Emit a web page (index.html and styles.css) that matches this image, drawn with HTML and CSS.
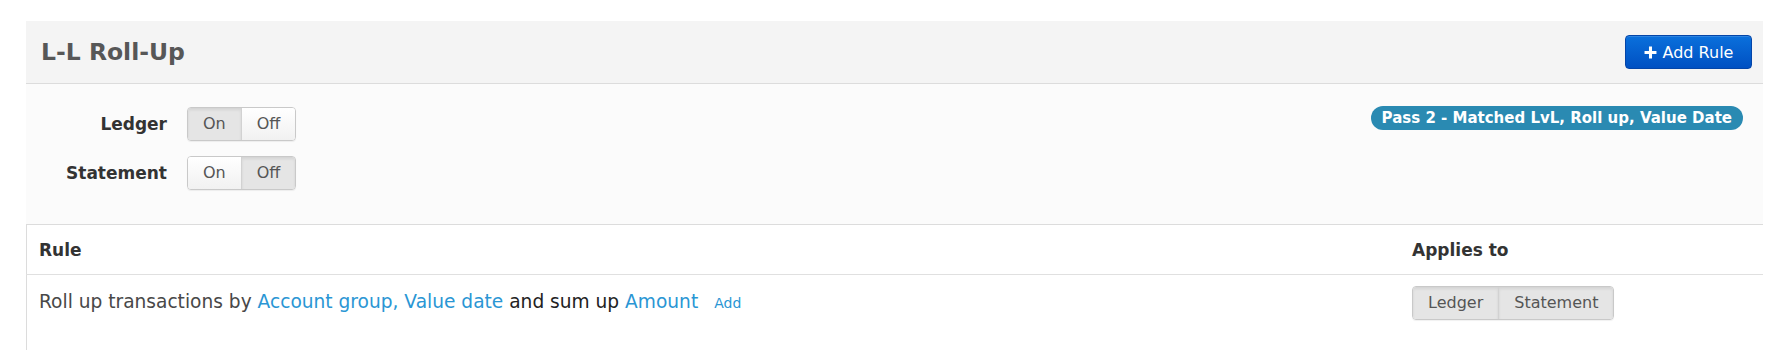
FILE: index.html
```html
<!DOCTYPE html>
<html>
<head>
<meta charset="utf-8">
<link rel="stylesheet" href="styles.css">
</head>
<body>
<div class="panel">
  <div class="panel-header">
    <h2 class="title">L-L Roll-Up</h2>
    <button class="btn-primary"><svg class="plus" viewBox="0 0 12 12" width="13" height="13"><path d="M6 0.5V11.5M0.5 6H11.5" stroke="#fff" stroke-width="2.8"/></svg>Add Rule</button>
  </div>
  <div class="settings">
    <div class="toggles">
      <div class="t-label">Ledger</div>
      <div class="seg">
        <span class="seg-item active">On</span><span class="seg-item">Off</span>
      </div>
      <div class="t-label">Statement</div>
      <div class="seg">
        <span class="seg-item">On</span><span class="seg-item active">Off</span>
      </div>
    </div>
    <span class="badge">Pass 2 - Matched LvL, Roll up, Value Date</span>
  </div>
  <table class="rules">
    <thead>
      <tr><th class="col-rule">Rule</th><th class="col-applies">Applies to</th></tr>
    </thead>
    <tbody>
      <tr>
        <td class="rule-text">Roll up transactions by <a class="link">Account group, Value date</a> <span class="dark">and sum up</span> <a class="link">Amount</a><a class="link small">Add</a></td>
        <td><div class="seg seg-applies"><span class="seg-item active">Ledger</span><span class="seg-item active">Statement</span></div></td>
      </tr>
    </tbody>
  </table>
</div>
</body>
</html>
```
FILE: styles.css
```css
html, body {
  margin: 0;
  padding: 0;
  background: #ffffff;
  font-family: "DejaVu Sans", "Liberation Sans", sans-serif;
}
body {
  padding: 21px 0 0 26px;
}
.panel {
  width: 1737px;
  background: #ffffff;
}
.panel-header {
  height: 62px;
  background: #f4f4f4;
  border-bottom: 1px solid #dcdcdc;
  display: flex;
  align-items: center;
  justify-content: space-between;
  padding: 0 11px 0 15px;
}
.title {
  margin: 0;
  font-size: 23.5px;
  font-weight: bold;
  color: #575757;
}
.btn-primary {
  height: 34px;
  width: 127px;
  border: 1px solid #0445a8;
  border-radius: 4px;
  background: linear-gradient(#0a70dc, #0050c2);
  color: #ffffff;
  font-family: inherit;
  font-size: 16px;
  display: flex;
  align-items: center;
  justify-content: center;
  gap: 6px;
  padding: 0;
  box-shadow: inset 0 1px 0 rgba(255,255,255,0.15);
}
.settings {
  background: #fbfbfb;
  border-bottom: 1px solid #dcdcdc;
  display: flex;
  justify-content: space-between;
  align-items: flex-start;
  padding: 23px 20px 34px 0;
}
.toggles {
  display: grid;
  grid-template-columns: 141px auto;
  column-gap: 20px;
  row-gap: 15px;
  align-items: center;
}
.t-label {
  text-align: right;
  font-size: 17px;
  font-weight: bold;
  color: #333333;
}
.seg {
  display: inline-flex;
  border: 1px solid #c9c9c9;
  border-radius: 4px;
  overflow: hidden;
  box-shadow: 0 1px 1px rgba(0,0,0,0.06);
}
.seg-item {
  font-size: 16px;
  line-height: 20px;
  padding: 6px 15px;
  color: #555555;
  background: linear-gradient(#ffffff, #f1f1f1);
}
.seg-item + .seg-item {
  border-left: 1px solid #d2d2d2;
}
.seg-item.active {
  background: #e5e5e5;
  box-shadow: inset 0 2px 3px rgba(0,0,0,0.08);
}
.badge {
  margin-top: -1px;
  height: 24px;
  line-height: 24px;
  padding: 0 11px;
  border-radius: 12px;
  background: #2a8ab2;
  color: #ffffff;
  font-size: 15px;
  font-weight: bold;
  white-space: nowrap;
}
.rules {
  width: 1737px;
  border-collapse: collapse;
  border-left: 1px solid #dcdcdc;
}
.rules th {
  height: 49px;
  padding: 0 12px;
  text-align: left;
  font-size: 17px;
  font-weight: bold;
  color: #333333;
  border-bottom: 1px solid #e0e0e0;
}
.col-rule {
  width: 1349px;
}
.rules td {
  vertical-align: top;
  padding: 11px 12px 30px;
}
.rule-text {
  font-size: 18.6px;
  line-height: 31px;
  color: #484848;
  white-space: nowrap;
}
.link {
  color: #2a96d4;
}
.dark {
  color: #222222;
}
.small {
  font-size: 14px;
  margin-left: 16px;
}
.seg-applies .seg-item {
  padding: 6px 15px;
}
```
